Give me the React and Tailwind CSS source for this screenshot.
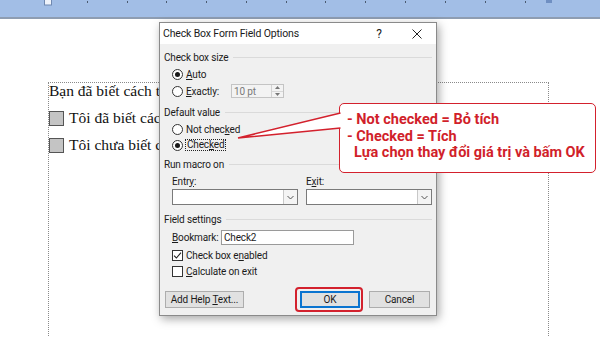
import React from 'react'

const uiFont = "font-['Roboto','Liberation_Sans',sans-serif]"

function Radio({ on }) {
  return (
    <span className="w-[11px] h-[11px] shrink-0 rounded-full border border-[#333] bg-white flex items-center justify-center">
      {on && <span className="w-[5px] h-[5px] rounded-full bg-[#1a1a1a]" />}
    </span>
  )
}

function Check({ on }) {
  return (
    <span className="w-[11px] h-[11px] shrink-0 border border-[#333] bg-white flex items-center justify-center">
      {on && (
        <svg width="9" height="9" viewBox="0 0 9 9">
          <path d="M1 4.6 L3.4 7 L8 1.6" fill="none" stroke="#222" strokeWidth="1.1" />
        </svg>
      )}
    </span>
  )
}

function Group({ children, className = '' }) {
  return (
    <div className={`flex items-center gap-[5px] pl-[4px] pr-[4px] h-[18px] ${className}`}>
      <span>{children}</span>
      <span className="flex-1 h-px bg-[#dadada]" />
    </div>
  )
}

function Combo() {
  return (
    <div className="w-[126px] h-[16px] bg-white border border-[#7a7a7a] flex justify-end">
      <span className="w-[14px] h-full border-l border-[#c8c8c8] bg-[#f4f4f4] flex items-center justify-center">
        <svg width="7" height="5" viewBox="0 0 7 5">
          <path d="M0.5 1 L3.5 4 L6.5 1" fill="none" stroke="#555" strokeWidth="1" />
        </svg>
      </span>
    </div>
  )
}

function Btn({ children, className = '' }) {
  return (
    <div className={`h-[17px] bg-[#e1e1e1] border border-[#adadad] flex items-center justify-center ${className}`}>
      <span>{children}</span>
    </div>
  )
}

function Ruler() {
  const ticks = [87, 127, 166, 206, 246, 286, 325, 365, 405, 445, 485, 525]
  return (
    <div className="h-[19px] bg-[#a2bee6] border-b-2 border-[#8e9db2]">
      <svg width="600" height="8" viewBox="0 0 600 8" className="block">
        {ticks.map(x => (
          <rect key={x} x={x} y="1" width="1" height="2" fill="#4a5a70" />
        ))}
        <rect x="44.5" y="-1" width="7" height="6" fill="#eef3fb" stroke="#6f88b0" />
        <rect x="546" y="0" width="6" height="3" fill="#6f8fc2" />
      </svg>
    </div>
  )
}

function Document() {
  return (
    <div className="ml-[48px] mt-[63px] w-[501px] h-[260px] border border-dotted border-[#8a8a8a] font-['Liberation_Serif',serif] text-[15.5px] text-[#111]">
      <div className="h-[18px] leading-[18px] -mt-px">Bạn đã biết cách tạo checkbox trong Word chưa?</div>
      <div className="mt-[9px] h-[18px] flex items-center gap-[5px]">
        <span className="w-[15px] h-[15px] border border-[#555] bg-[#c4c4c4]" />
        <span>Tôi đã biết cách tạo checkbox</span>
      </div>
      <div className="mt-[9px] h-[18px] flex items-center gap-[5px]">
        <span className="w-[15px] h-[15px] border border-[#555] bg-[#c4c4c4]" />
        <span>Tôi chưa biết cách tạo checkbox</span>
      </div>
    </div>
  )
}

function Dialog() {
  return (
    <div className={`absolute left-[159px] top-[22px] w-[278px] h-[294px] border border-[#8a8a8a] bg-[#f0f0f0] shadow-[2px_3px_9px_rgba(0,0,0,0.35)] text-[10px] tracking-[-0.15px] text-[#1b1b1b] ${uiFont}`}>
      <div className="h-[21px] bg-white flex items-center pl-[3px] text-[10.5px]">
        <span>Check Box Form Field Options</span>
        <span className="ml-auto w-[10px] text-center text-[12px] mr-[28px]">?</span>
        <svg width="10" height="10" viewBox="0 0 10 10" className="mr-[14px]">
          <path d="M0.5 0.5 L9.5 9.5 M9.5 0.5 L0.5 9.5" stroke="#222" strokeWidth="1" />
        </svg>
      </div>

      <Group className="mt-[4px]">Check box size</Group>
      <div className="h-[16px] flex items-center pl-[12px] gap-[3px]">
        <Radio on />
        <span><u>A</u>uto</span>
      </div>
      <div className="h-[18px] flex items-center pl-[12px] gap-[3px]">
        <Radio />
        <span className="w-[42px]"><u>E</u>xactly:</span>
        <div className="w-[53px] h-[14px] border border-[#c4c4c4] bg-[#f3f3f3] flex items-center text-[#7a7a7a]">
          <span className="pl-[2px]">10 pt</span>
          <span className="ml-auto w-[12px] h-full border-l border-[#d2d2d2] flex flex-col">
            <span className="flex-1 flex items-center justify-center">
              <svg width="5" height="3" viewBox="0 0 5 3"><path d="M0 3 L2.5 0 L5 3Z" fill="#777" /></svg>
            </span>
            <span className="flex-1 flex items-center justify-center border-t border-[#d8d8d8]">
              <svg width="5" height="3" viewBox="0 0 5 3"><path d="M0 0 L2.5 3 L5 0Z" fill="#777" /></svg>
            </span>
          </span>
        </div>
      </div>

      <Group className="mt-[3px]">Default value</Group>
      <div className="h-[16px] flex items-center pl-[12px] gap-[3px]">
        <Radio />
        <span>Not chec<u>k</u>ed</span>
      </div>
      <div className="h-[16px] flex items-center pl-[12px] gap-[2px]">
        <Radio on />
        <span className="border border-dotted border-[#222] px-px leading-[10px] h-[12px]">Chec<u>k</u>ed</span>
      </div>

      <Group className="mt-[2px]">Run macro on</Group>
      <div className="h-[16px] flex items-center pl-[12px]">
        <span className="w-[134px]">Entr<u>y</u>:</span>
        <span>E<u>x</u>it:</span>
      </div>
      <div className="flex pl-[12px] gap-[8px]">
        <Combo />
        <Combo />
      </div>

      <Group className="mt-[5px]">Field settings</Group>
      <div className="h-[18px] flex items-center pl-[12px]">
        <span className="w-[49px]"><u>B</u>ookmark:</span>
        <div className="w-[133px] h-[15px] bg-white border border-[#9a9a9a] flex items-center pl-[2px]">Check2</div>
      </div>
      <div className="mt-[1px] h-[16px] flex items-center pl-[12px] gap-[3px]">
        <Check on />
        <span>Check box e<u>n</u>abled</span>
      </div>
      <div className="h-[16px] flex items-center pl-[12px] gap-[3px]">
        <Check />
        <span><u>C</u>alculate on exit</span>
      </div>

      <div className="mt-[12px] flex items-center pl-[5px] pr-[6px]">
        <Btn className="w-[79px]">Add Help <u>T</u>ext...</Btn>
        <div className="relative ml-auto w-[60px]">
          <div className="h-[17px] bg-[#e1e1e1] border-2 border-[#0a74d0] flex items-center justify-center">OK</div>
          <span className="absolute -left-[5px] -right-[3px] -top-[4px] -bottom-[4px] border-2 border-[#d3212d] rounded-[4px]" />
        </div>
        <Btn className="ml-[9px] w-[61px]">Cancel</Btn>
      </div>
    </div>
  )
}

function Callout() {
  return (
    <>
      <div className="absolute left-[339px] top-[103px] w-[257px] h-[70px] bg-white border-[1.5px] border-[#d3212d] rounded-[5px] pl-[7px] pt-[8px] font-['Roboto',sans-serif] font-bold text-[14.5px] leading-[16.5px] text-[#d11f2b]">
        <div>- Not checked = Bỏ tích</div>
        <div>- Checked = Tích</div>
        <div className="pl-[7px]">Lựa chọn thay đổi giá trị và bấm OK</div>
      </div>
      <svg className="absolute left-[230px] top-[100px]" width="115" height="50" viewBox="230 100 115 50">
        <polygon points="341,113 238,138 341,128" fill="white" />
        <polyline points="340.5,113 238,138 340.5,128" fill="none" stroke="#d3212d" strokeWidth="1.5" />
      </svg>
    </>
  )
}

export default function App() {
  return (
    <div className="relative w-[600px] h-[337px] overflow-hidden bg-white">
      <Ruler />
      <Document />
      <Dialog />
      <Callout />
    </div>
  )
}
